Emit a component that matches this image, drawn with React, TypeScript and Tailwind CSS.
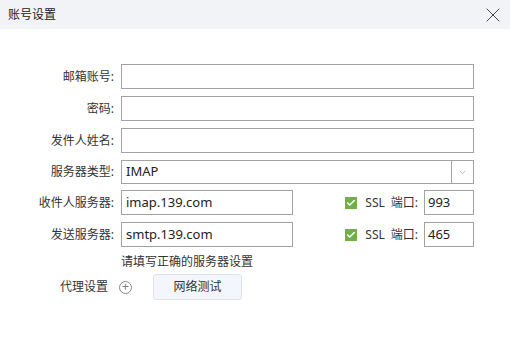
import { Check, X, ChevronDown } from 'lucide-react'

const font = { fontFamily: '"Noto Sans", "Noto Sans CJK SC", sans-serif' }

function Label({ text }: { text: string }) {
  return <div className="w-[115px] shrink-0 pr-[1px] text-right text-[12px] text-[#333]">{text}</div>
}

function Field({ value = '', w = 'w-[353px]' }: { value?: string; w?: string }) {
  return (
    <div className={`${w} h-[25px] border border-[#a3a3a3] bg-white pl-[4px] flex items-center text-[13px] text-[#222]`}>
      {value}
    </div>
  )
}

function SslPort({ port }: { port: string }) {
  return (
    <div className="ml-auto flex items-center">
      <div className="w-[12px] h-[12px] bg-[#6fb04b] flex items-center justify-center">
        <Check size={10} color="#fff" strokeWidth={3.5} />
      </div>
      <span className="ml-[8px] text-[12px] text-[#333]">SSL</span>
      <span className="ml-[6px] text-[12px] text-[#333]">端口:</span>
      <div className="ml-[6px] w-[50px] h-[25px] border border-[#a3a3a3] pl-[3px] flex items-center text-[13px] text-[#222]">
        {port}
      </div>
    </div>
  )
}

export default function App() {
  return (
    <div className="w-[510px] h-[342px] bg-white overflow-hidden" style={font}>
      {/* Title bar */}
      <div className="h-[29px] bg-[#f2f3f7] flex items-center pl-[8px] pr-[5px]">
        <span className="text-[12px] text-[#222]">账号设置</span>
        <X size={24} strokeWidth={0.9} color="#333" className="ml-auto" />
      </div>

      {/* Form */}
      <div className="pt-[35px] pr-[36px] flex flex-col">
        <div className="flex items-center gap-[6px]">
          <Label text="邮箱账号:" />
          <Field />
        </div>
        <div className="mt-[7px] flex items-center gap-[6px]">
          <Label text="密码:" />
          <Field />
        </div>
        <div className="mt-[7px] flex items-center gap-[6px]">
          <Label text="发件人姓名:" />
          <Field />
        </div>
        <div className="mt-[7px] flex items-center gap-[6px]">
          <Label text="服务器类型:" />
          <div className="w-[353px] h-[24px] border border-[#a3a3a3] flex items-center">
            <span className="pl-[4px] text-[13px] text-[#222] flex-1">IMAP</span>
            <div className="w-[22px] h-full border-l border-[#a3a3a3] flex items-center justify-center">
              <ChevronDown size={9} color="#999" strokeWidth={2} />
            </div>
          </div>
        </div>
        <div className="mt-[6px] flex items-center gap-[6px]">
          <Label text="收件人服务器:" />
          <Field value="imap.139.com" w="w-[172px]" />
          <SslPort port="993" />
        </div>
        <div className="mt-[7px] flex items-center gap-[6px]">
          <Label text="发送服务器:" />
          <Field value="smtp.139.com" w="w-[172px]" />
          <SslPort port="465" />
        </div>
        <div className="mt-[7px] pl-[121px] text-[12px] text-[#333] leading-[16px]">请填写正确的服务器设置</div>
        <div className="mt-[4px] flex items-center">
          <span className="ml-[60px] text-[12px] text-[#333]">代理设置</span>
          <div className="ml-[11px] w-[13px] h-[13px] rounded-full border border-[#888] flex items-center justify-center">
            <span className="text-[12px] leading-none text-[#777] -mt-[1px]">+</span>
          </div>
          <button className="ml-[21px] w-[89px] h-[26px] rounded-[3px] border border-[#dde3ea] bg-[#f3f7fb] text-[12px] text-[#333]">
            网络测试
          </button>
        </div>
      </div>
    </div>
  )
}
